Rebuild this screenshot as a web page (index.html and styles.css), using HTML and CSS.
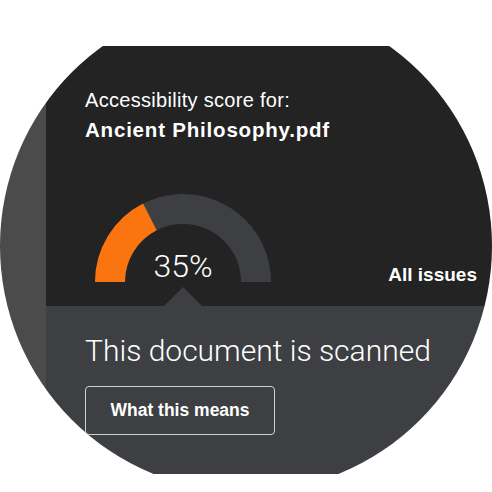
FILE: index.html
```html
<!DOCTYPE html>
<html lang="en">
<head>
<meta charset="utf-8">
<title>Accessibility score</title>
<link rel="stylesheet" href="styles.css">
</head>
<body>
<div class="circle">
  <div class="screen">
    <div class="strip"></div>
    <div class="main">
      <section class="top">
        <p class="label">Accessibility score for:</p>
        <p class="file">Ancient Philosophy.pdf</p>
        <div class="score-row">
          <div class="gauge">
            <svg class="gauge-svg" width="176" height="88" viewBox="0 0 176 88">
              <path d="M15 88 A73 73 0 0 1 161 88" fill="none" stroke="#3e3f43" stroke-width="30"/>
              <path d="M15 88 A73 73 0 0 1 54.86 22.96" fill="none" stroke="#fa750f" stroke-width="30"/>
            </svg>
            <span class="gauge-value">35%</span>
            <span class="pointer"></span>
          </div>
          <a class="all-issues">All issues</a>
        </div>
      </section>
      <section class="bottom">
        <h1 class="status">This document is scanned</h1>
        <button class="btn" type="button">What this means</button>
      </section>
    </div>
  </div>
</div>
</body>
</html>
```

FILE: styles.css
```css
html, body {
  margin: 0;
  padding: 0;
  background: #ffffff;
}

body {
  font-family: "Liberation Sans", Arial, sans-serif;
  color: #ffffff;
}

.circle {
  width: 492px;
  height: 492px;
  border-radius: 50%;
  overflow: hidden;
  background: #ffffff;
  padding-top: 46px;
  box-sizing: border-box;
}

.screen {
  height: 428px;
  display: flex;
}

.strip {
  width: 46px;
  flex: none;
  background: #4b4b4b;
}

.main {
  flex: 1;
  display: flex;
  flex-direction: column;
}

.top {
  height: 260px;
  box-sizing: border-box;
  background: #232323;
  padding: 43px 15px 0 39px;
  display: flex;
  flex-direction: column;
}

.label {
  margin: 0;
  font-size: 20px;
  line-height: 22px;
  letter-spacing: 0.3px;
}

.file {
  margin: 8px 0 0;
  font-size: 20.5px;
  line-height: 22px;
  font-weight: bold;
  letter-spacing: 0.8px;
}

.score-row {
  margin-top: auto;
  margin-bottom: 24px;
  display: flex;
  align-items: flex-end;
  justify-content: space-between;
}

.gauge {
  position: relative;
  width: 176px;
  height: 88px;
  margin-left: 10px;
}

.gauge-svg {
  display: block;
}

.gauge-value {
  position: absolute;
  left: 0;
  right: 0;
  bottom: 0;
  text-align: center;
  font-family: Roboto, "Open Sans", sans-serif;
  font-weight: 300;
  font-size: 32px;
  line-height: 32px;
}

.pointer {
  position: absolute;
  left: 50%;
  bottom: -24px;
  width: 0;
  height: 0;
  margin-left: -19px;
  border-left: 19px solid transparent;
  border-right: 19px solid transparent;
  border-bottom: 19px solid #3e3f43;
}

.all-issues {
  font-size: 19px;
  line-height: 14px;
  font-weight: bold;
  color: #ffffff;
}

.bottom {
  flex: 1;
  background: #3e3f43;
  padding: 27px 0 0 39px;
  display: flex;
  flex-direction: column;
  align-items: flex-start;
}

.status {
  margin: 0;
  font-family: Roboto, "Open Sans", sans-serif;
  font-weight: 300;
  font-size: 30px;
  line-height: 36px;
}

.btn {
  margin-top: 17px;
  width: 190px;
  height: 49px;
  box-sizing: border-box;
  border: 1px solid #cfcfcf;
  border-radius: 4px;
  background: transparent;
  color: #ffffff;
  font-family: "Liberation Sans", Arial, sans-serif;
  font-weight: bold;
  font-size: 17.5px;
  padding: 0;
}
```
